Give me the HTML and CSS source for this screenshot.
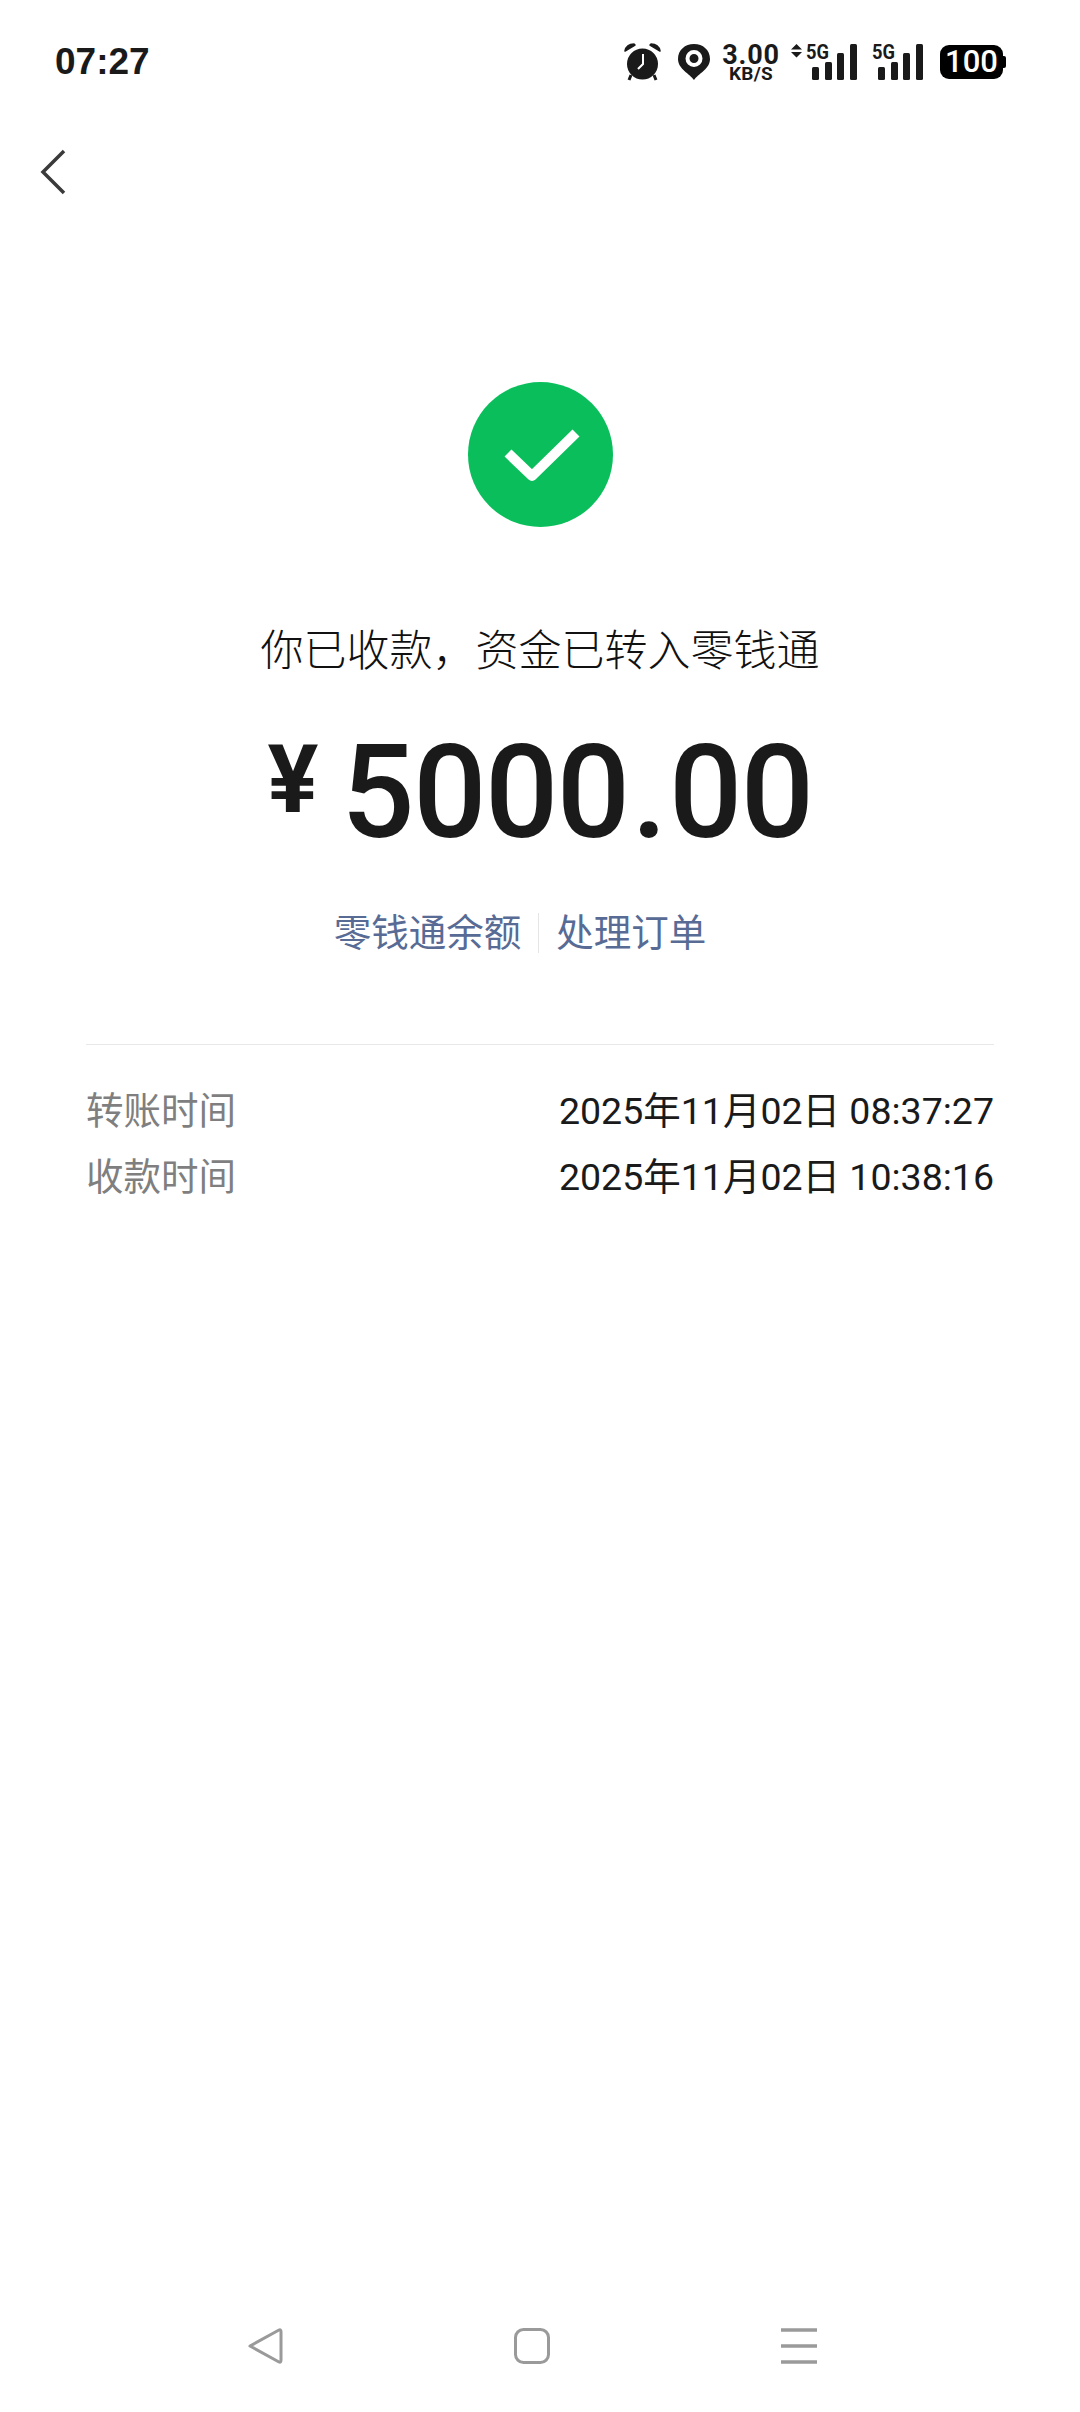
FILE: index.html
```html
<!DOCTYPE html>
<html lang="zh-CN">
<head>
    <meta charset="UTF-8">
    <meta name="viewport" content="width=device-width, initial-scale=1.0">
    <title>收款详情</title>
    <link rel="stylesheet" href="styles.css">
</head>
<body>
    <div class="status-bar">
        <span class="time">07:27</span>
        <div class="status-icons">
            <svg class="icon-alarm" width="37" height="38" viewBox="0 0 37 38">
                <path d="M1 8 C2 3 6 1 10 1 L11 2 Z M36 8 C35 3 31 1 27 1 L26 2 Z" fill="#1a1a1a" stroke="#1a1a1a" stroke-width="1.5" stroke-linejoin="round"/>
                <circle cx="18.5" cy="21" r="15.5" fill="#1a1a1a"/>
                <path d="M7 32 L5 37 M30 32 L32 37" stroke="#1a1a1a" stroke-width="3"/>
                <path d="M19 11 V21 L14 26" fill="none" stroke="#fff" stroke-width="2"/>
            </svg>
            <svg class="icon-pin" width="32" height="36" viewBox="0 0 32 36">
                <path d="M16 36 C12 30 0 25 0 15 C0 6 7 0 16 0 C25 0 32 6 32 15 C32 25 20 30 16 36 Z" fill="#1a1a1a"/>
                <circle cx="16" cy="14.5" r="6.5" fill="none" stroke="#fff" stroke-width="4"/>
            </svg>
            <div class="speed">
                <span class="speed-value">3.00</span>
                <span class="speed-unit">KB/S</span>
            </div>
            <svg class="signal" width="66" height="37" viewBox="0 0 66 37">
                <path d="M5.500 0 L11 5.500 H0 Z M0 8 H11 L5.500 13.500 Z" fill="#1a1a1a"/>
                <text class="signal-label" x="15" y="15" textLength="23" lengthAdjust="spacingAndGlyphs">5G</text>
                <rect x="21" y="23" width="7" height="13" rx="1.500" fill="#1a1a1a"/>
                <rect x="34" y="18" width="7" height="18" rx="1.500" fill="#1a1a1a"/>
                <rect x="46" y="9" width="7" height="27" rx="1.500" fill="#1a1a1a"/>
                <rect x="59" y="0" width="7" height="36" rx="1.500" fill="#1a1a1a"/>
            </svg>
            <svg class="signal" width="51" height="37" viewBox="0 0 51 37">
                <text class="signal-label" x="0" y="15" textLength="23" lengthAdjust="spacingAndGlyphs">5G</text>
                <rect x="6" y="23" width="7" height="13" rx="1.500" fill="#1a1a1a"/>
                <rect x="19" y="18" width="7" height="18" rx="1.500" fill="#1a1a1a"/>
                <rect x="31" y="9" width="7" height="27" rx="1.500" fill="#1a1a1a"/>
                <rect x="44" y="0" width="7" height="36" rx="1.500" fill="#1a1a1a"/>
            </svg>
            <div class="battery">
                <span class="battery-level">100</span>
                <span class="battery-nub"></span>
            </div>
        </div>
    </div>

    <div class="nav">
        <svg width="26" height="46" viewBox="0 0 26 46">
            <path d="M24 2 L3 23 L24 44" fill="none" stroke="#3a3a3a" stroke-width="3.500"/>
        </svg>
    </div>

    <div class="main">
        <svg class="success-icon" width="145" height="145" viewBox="0 0 145 145">
            <circle cx="72.500" cy="72.500" r="72.500" fill="#0abf5b"/>
            <path d="M40 71 L64 94 L108 51" fill="none" stroke="#fff" stroke-width="10" stroke-linejoin="round"/>
        </svg>
        <div class="title">你已收款，资金已转入零钱通</div>
        <div class="amount">
            <span class="currency">¥</span>
            <span class="value">5000<span class="dot">.</span>00</span>
        </div>
        <div class="links">
            <a class="link">零钱通余额</a>
            <span class="link-sep"></span>
            <a class="link">处理订单</a>
        </div>
        <div class="details">
            <div class="row">
                <span class="row-label">转账时间</span>
                <span class="row-value">2025年11月02日 08:37:27</span>
            </div>
            <div class="row">
                <span class="row-label">收款时间</span>
                <span class="row-value">2025年11月02日 10:38:16</span>
            </div>
        </div>
    </div>

    <div class="system-nav">
        <svg width="36" height="36" viewBox="0 0 36 36">
            <path d="M3 18 L32 2 Q34 1 34 4 V32 Q34 35 32 34 Z" fill="none" stroke="#9a9a9a" stroke-width="3" stroke-linejoin="round"/>
        </svg>
        <svg width="36" height="36" viewBox="0 0 36 36">
            <rect x="1.500" y="1.500" width="33" height="33" rx="8" fill="none" stroke="#9a9a9a" stroke-width="3"/>
        </svg>
        <svg width="36" height="36" viewBox="0 0 36 36">
            <path d="M0 2 H36 M0 18 H36 M0 34 H36" stroke="#9a9a9a" stroke-width="3.500"/>
        </svg>
    </div>
</body>
</html>
```

FILE: styles.css
```css
body { margin: 0; height: 2412px; display: flex; flex-direction: column; background-color: #fff; color: #1a1a1a; font-family: Roboto, "Noto Sans CJK SC", sans-serif; overflow: hidden; }

.status-bar { height: 124px; display: flex; align-items: center; justify-content: space-between; padding: 0 74px 0 55px; }
.time { font-family: "Liberation Sans", sans-serif; font-weight: 700; font-size: 37px; }
.status-icons { display: flex; align-items: center; }
.icon-alarm { margin-right: 17px; }
.icon-pin { margin-right: 12px; }
.speed { display: flex; flex-direction: column; align-items: center; width: 58px; margin-right: 11px; }
.speed-value { font-size: 27px; font-weight: 700; line-height: 22px; letter-spacing: 0.8px; }
.speed-unit { font-size: 19px; font-weight: 700; line-height: 15px; letter-spacing: 0.3px; }
.signal { overflow: visible; }
.signal + .signal { margin-left: 15px; }
.signal-label { font-family: Roboto, sans-serif; font-weight: 700; font-size: 21px; fill: #1a1a1a; }
.battery { display: flex; align-items: center; margin-left: 17px; }
.battery-level { width: 63px; height: 34px; border-radius: 9px; background-color: #000; color: #fff; font-size: 31px; font-weight: 500; line-height: 34px; text-align: center; }
.battery-nub { width: 3px; height: 12px; background-color: #000; border-radius: 0 2px 2px 0; }

.nav { height: 96px; padding: 0 0 4px 40px; display: flex; align-items: center; }

.main { flex: 1; display: flex; flex-direction: column; align-items: center; padding: 158px 86px 0; }
.success-icon { display: block; }
.title { margin-top: 94px; font-size: 43px; line-height: 60px; font-weight: 300; color: #111; white-space: nowrap; }
.amount { margin-top: 42px; height: 140px; display: flex; align-items: flex-start; justify-content: center; gap: 23px; }
.currency { margin-top: 7px; font-size: 95px; line-height: 100px; font-weight: 700; }
.value { font-size: 129px; line-height: 140px; font-weight: 500; letter-spacing: -1.5px; }
.dot { margin: 0 3px; }
.links { margin-top: 45px; margin-right: 40px; display: flex; align-items: center; font-size: 37.5px; line-height: 50px; color: #576b95; }
.link-sep { width: 1px; height: 40px; margin: 0 17px; background-color: #e5e5e5; }
.details { margin-top: 86px; width: 100%; border-top: 1px solid #e8e8e8; padding-top: 33px; }
.row { display: flex; justify-content: space-between; font-size: 37.5px; line-height: 66px; }
.row-label { color: #7f7f7f; }

.system-nav { display: grid; grid-template-columns: repeat(3, 267px); justify-items: center; padding: 0 0 48px 131px; }
```
